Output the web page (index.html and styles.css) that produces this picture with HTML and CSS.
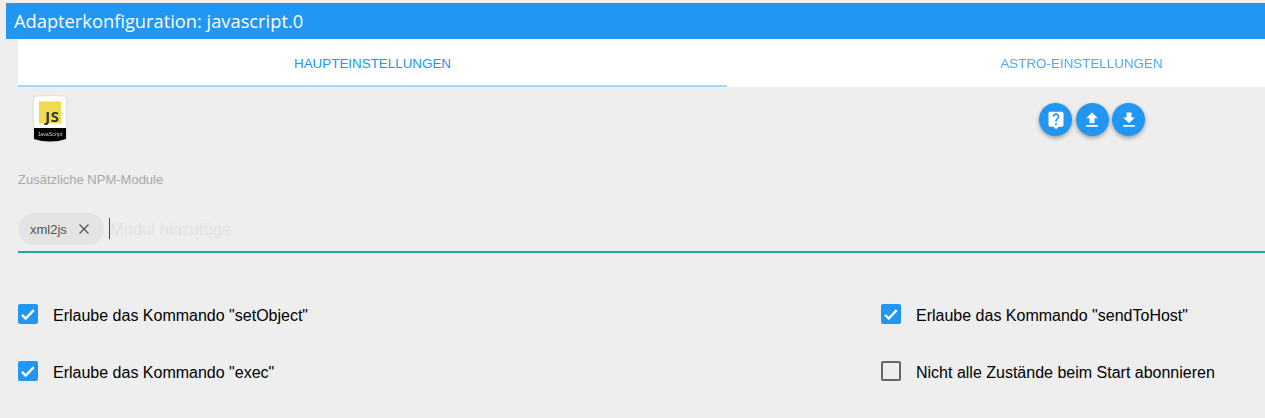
FILE: index.html
```html
<!DOCTYPE html>
<html lang="en">
<head>
  <meta charset="UTF-8">
  <meta name="viewport" content="width=device-width, initial-scale=1.0">
  <title>Adapterkonfiguration</title>
  <link rel="stylesheet" href="styles.css">
</head>
<body>
  <div class="title-bar">Adapterkonfiguration: javascript.0</div>
  <div class="content">
    <div class="tabs">
      <div class="tab active">Haupteinstellungen</div>
      <div class="tab">Astro-Einstellungen</div>
    </div>

    <div class="top-row">
      <svg class="logo" width="32" height="46" viewBox="0 0 32 46">
        <path d="M0 4q0-3 3-3.400q13-1.200 26 0q3 .4 3 3.400v38h-32z" fill="#fff"/>
        <rect x="5" y="5.500" width="22" height="22" fill="#f0db4f"/>
        <text x="25.500" y="26" text-anchor="end" class="logo-js">JS</text>
        <path d="M0 32h32v11q-16 5-32 0z" fill="#000"/>
        <text x="16" y="40" text-anchor="middle" class="logo-name">JavaScript</text>
      </svg>
      <div class="actions">
        <button class="round-btn"><svg viewBox="0 0 24 24" width="20" height="20"><path d="M19 2H5c-1.110 0-2 .9-2 2v14c0 1.100.89 2 2 2h4l3 3 3-3h4c1.100 0 2-.9 2-2V4c0-1.100-.9-2-2-2zm-6 16h-2v-2h2v2zm2.070-7.750l-.9.92C13.450 11.900 13 12.500 13 14h-2v-.5c0-1.100.45-2.100 1.170-2.830l1.240-1.260c.37-.36.59-.86.59-1.410 0-1.100-.9-2-2-2s-2 .9-2 2H8c0-2.210 1.790-4 4-4s4 1.790 4 4c0 .88-.36 1.680-.93 2.250z"/></svg></button>
        <button class="round-btn"><svg viewBox="0 0 24 24" width="20" height="20"><path d="M9 16h6v-6h4l-7-7-7 7h4zm-4 2h14v2H5z"/></svg></button>
        <button class="round-btn"><svg viewBox="0 0 24 24" width="20" height="20"><path d="M19 9h-4V3H9v6H5l7 7 7-7zM5 18v2h14v-2H5z"/></svg></button>
      </div>
    </div>

    <div class="field-label">Zusätzliche NPM-Module</div>
    <div class="chips-input">
      <span class="chip">xml2js <svg viewBox="0 0 12 12" width="12" height="12"><path d="M1.500 1.500l9 9m0-9l-9 9" stroke="#555" stroke-width="1.300" fill="none"/></svg></span>
      <input class="chip-text" type="text" placeholder="Modul hinzufüge">
    </div>

    <div class="options">
      <label class="option"><span class="box checked"><svg viewBox="0 0 20 20" width="20" height="20"><path d="M4 10.800l3.700 3.700 8-8.300" stroke="#fff" stroke-width="2.400" fill="none"/></svg></span>Erlaube das Kommando "setObject"</label>
      <label class="option"><span class="box checked"><svg viewBox="0 0 20 20" width="20" height="20"><path d="M4 10.800l3.700 3.700 8-8.300" stroke="#fff" stroke-width="2.400" fill="none"/></svg></span>Erlaube das Kommando "sendToHost"</label>
      <label class="option"><span class="box checked"><svg viewBox="0 0 20 20" width="20" height="20"><path d="M4 10.800l3.700 3.700 8-8.300" stroke="#fff" stroke-width="2.400" fill="none"/></svg></span>Erlaube das Kommando "exec"</label>
      <label class="option"><span class="box"></span>Nicht alle Zustände beim Start abonnieren</label>
    </div>
  </div>
</body>
</html>
```

FILE: styles.css
```css
html {
  background: #eeeeee;
}
body {
  margin: 0;
  padding: 3px 0 0 6px;
  height: 415px;
  overflow: hidden;
  font-family: "Liberation Sans", Arial, sans-serif;
}
.title-bar {
  height: 36px;
  line-height: 36px;
  padding-left: 8px;
  background-color: #2196f3;
  color: #fff;
  font-family: "Open Sans", sans-serif;
  font-size: 18.300px;
}
.content {
  margin-left: 12px;
  width: 1247px;
  overflow: hidden;
}
/* second tab is cut off by the window, the strip is wider than the page */
.tabs {
  display: flex;
  width: 1418px;
  height: 48px;
  background-color: #fff;
}
.tab {
  flex: 1;
  line-height: 49px;
  text-align: center;
  text-transform: uppercase;
  font-size: 13.400px;
  color: #2196f3;
  opacity: 0.8;
}
.tab.active {
  opacity: 1;
  height: 46px;
  border-bottom: 2px solid #a6d8fb;
}
.top-row {
  height: 70px;
  box-sizing: border-box;
  padding-left: 16px;
  width: 1127px;
  display: flex;
  justify-content: space-between;
}
.logo {
  margin-top: 9px;
  filter: drop-shadow(0 0 1px rgba(0, 0, 0, 0.15));
}
.logo-js {
  font-family: "Open Sans", sans-serif;
  font-weight: 700;
  font-size: 15px;
  letter-spacing: 0.5px;
  fill: #323330;
}
.logo-name {
  font-family: "Liberation Sans", sans-serif;
  font-size: 5.300px;
  fill: #ccc;
}
.actions {
  display: flex;
  gap: 3.500px;
  padding-top: 16px;
}
.round-btn {
  width: 33px;
  height: 33px;
  padding: 0;
  border: none;
  border-radius: 50%;
  background-color: #2196f3;
  box-shadow: 0 2px 4px rgba(0, 0, 0, 0.35);
  display: flex;
  align-items: center;
  justify-content: center;
}
.round-btn svg {
  fill: #fff;
}
.field-label {
  font-size: 13px;
  line-height: 16px;
  color: #a8a8a8;
  height: 28px;
  margin-top: 15px;
}
.chips-input {
  display: flex;
  align-items: center;
  gap: 5px;
  margin-top: 10px;
  height: 38px;
  padding-bottom: 3px;
  border-bottom: 2px solid #26a69a;
}
.chip {
  display: flex;
  align-items: center;
  gap: 11px;
  width: 86px;
  height: 32px;
  box-sizing: border-box;
  padding-left: 12px;
  border-radius: 16px;
  background-color: #e4e4e4;
  font-size: 13px;
  color: #555;
}
.chip-text {
  width: 130px;
  height: 21px;
  box-sizing: border-box;
  margin-bottom: 2px;
  padding: 2px 0 0 0;
  border: none;
  border-left: 1px solid #444;
  outline: none;
  background: none;
  font-family: "Liberation Sans", Arial, sans-serif;
  font-size: 16.500px;
}
.chip-text::placeholder {
  color: #e2e2e2;
  opacity: 1;
}
.options {
  display: grid;
  grid-template-columns: 863px 1fr;
  row-gap: 37px;
  margin-top: 51px;
}
.option {
  display: flex;
  align-items: flex-start;
  height: 20px;
  line-height: 24px;
  font-size: 16px;
  color: #000;
}
.box {
  width: 20px;
  height: 20px;
  box-sizing: border-box;
  margin-right: 15px;
  border: 2px solid #666;
  border-radius: 2px;
}
.box.checked {
  border: none;
  background-color: #2196f3;
}
.box svg {
  display: block;
}
```
